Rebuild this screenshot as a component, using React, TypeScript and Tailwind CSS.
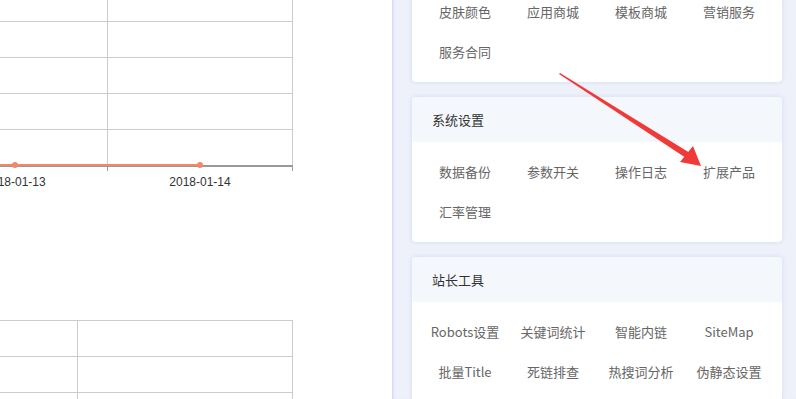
import React from "react";

const cards = [
  {
    title: "基础设置",
    items: ["皮肤颜色", "应用商城", "模板商城", "营销服务", "服务合同"],
  },
  {
    title: "系统设置",
    items: ["数据备份", "参数开关", "操作日志", "扩展产品", "汇率管理"],
  },
  {
    title: "站长工具",
    items: [
      "Robots设置",
      "关键词统计",
      "智能内链",
      "SiteMap",
      "批量Title",
      "死链排查",
      "热搜词分析",
      "伪静态设置",
    ],
  },
];

const Chart = () => (
  <svg width="392" height="200" className="block shrink-0">
    {[21, 57, 93, 129].map((y) => (
      <line key={y} x1="0" x2="292" y1={y + 0.5} y2={y + 0.5} stroke="#cccccc" />
    ))}
    <line x1="107.5" x2="107.5" y1="0" y2="165" stroke="#cccccc" />
    <line x1="292.5" x2="292.5" y1="0" y2="165" stroke="#cccccc" />
    <line x1="0" x2="293" y1="166" y2="166" stroke="#999999" strokeWidth="2" />
    <line x1="107.5" x2="107.5" y1="166" y2="171" stroke="#999999" />
    <line x1="292.5" x2="292.5" y1="166" y2="171" stroke="#999999" />
    <line x1="0" x2="200" y1="165" y2="165" stroke="#f4876a" strokeWidth="2" />
    <circle cx="15" cy="165" r="3" fill="#f4876a" />
    <circle cx="200" cy="165" r="3" fill="#f4876a" />
    <text x="15" y="186" textAnchor="middle" fontSize="12" fill="#333" fontFamily="'Liberation Sans', Arial, sans-serif">
      2018-01-13
    </text>
    <text x="200" y="186" textAnchor="middle" fontSize="12" fill="#333" fontFamily="'Liberation Sans', Arial, sans-serif">
      2018-01-14
    </text>
  </svg>
);

const Card = ({ title, items }: { title: string; items: string[] }) => (
  <div className="bg-white rounded-[4px] shadow-[0_0_4px_rgba(150,165,210,0.35)] overflow-hidden">
    <div className="h-[45px] bg-[#f4f7fb] flex items-center pl-[20px] text-[13px] text-[#333]">{title}</div>
    <div className="grid grid-cols-4 px-[9px] pt-[10px] pb-[10px]">
      {items.map((it) => (
        <div key={it} className="h-[40px] flex items-center justify-center text-[13px] text-[#666] whitespace-nowrap">
          {it}
        </div>
      ))}
    </div>
  </div>
);

export default function App() {
  return (
    <div
      className="relative flex w-[796px] h-[399px] overflow-hidden bg-white"
      style={{ fontFamily: "'Noto Sans CJK SC', 'Noto Sans', sans-serif" }}
    >
      <div className="w-[392px] shrink-0 flex flex-col">
        <Chart />
        <div className="mt-[120px] shrink-0">
          <table className="border-collapse w-[293px]">
            <tbody>
              {[0, 1, 2].map((r) => (
                <tr key={r} className="h-[36px]">
                  <td className="w-[77px] border-y border-r border-[#cccccc]"></td>
                  <td className="border border-[#cccccc]"></td>
                </tr>
              ))}
            </tbody>
          </table>
        </div>
      </div>
      <div className="flex-1 bg-[#eef1fa] pl-[20px] pr-[14px] shadow-[inset_3px_0_3px_-2px_rgba(180,190,225,0.6)]">
        <div className="flex flex-col gap-[15px] -mt-[63px]">
          {cards.map((c) => (
            <Card key={c.title} title={c.title} items={c.items} />
          ))}
        </div>
      </div>
      <svg className="absolute left-0 top-0 pointer-events-none" width="796" height="399">
        <polygon points="559,74 560,73 690,153 686,158" fill="#f03a3a" />
        <polygon points="701,166 680,162 693,146" fill="#f03a3a" />
      </svg>
    </div>
  );
}
